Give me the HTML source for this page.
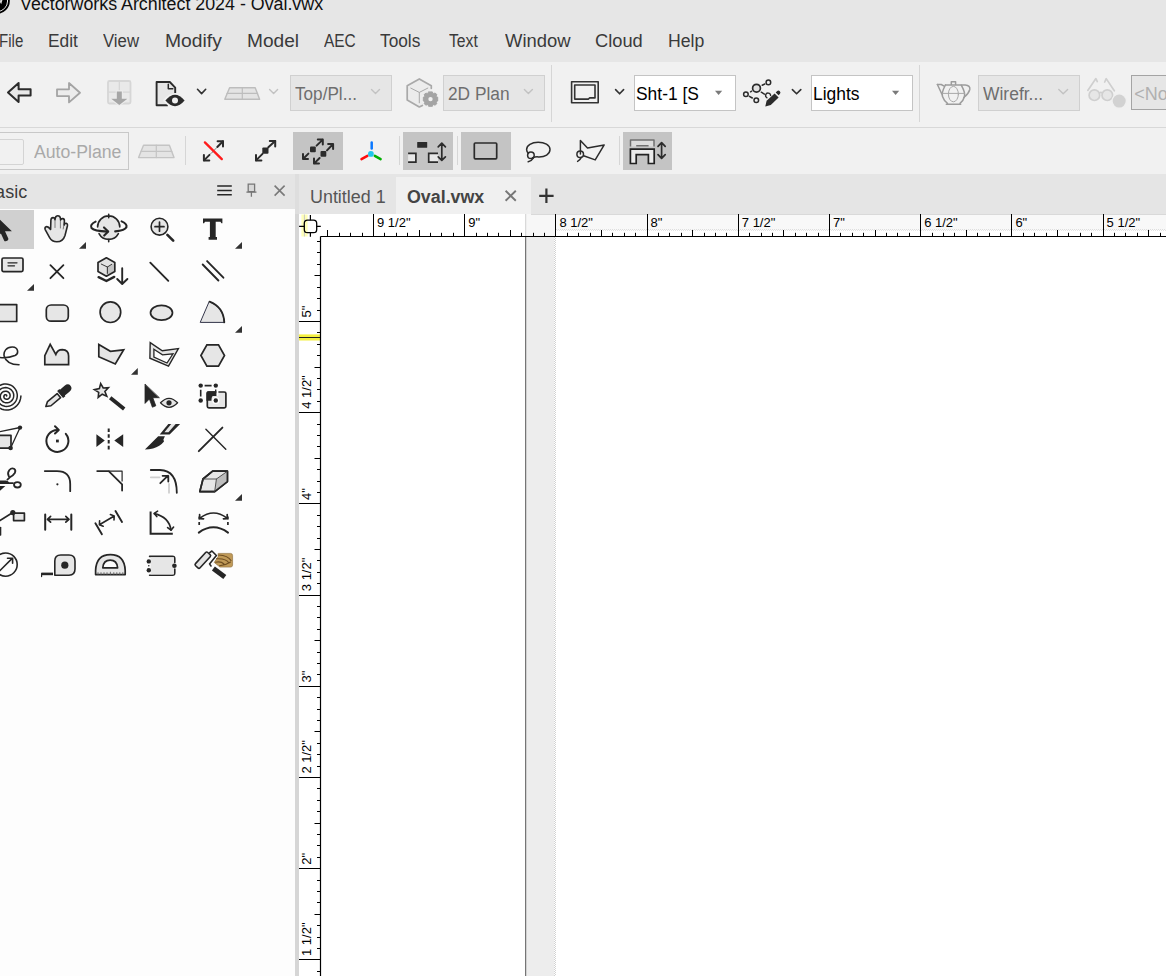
<!DOCTYPE html>
<html><head><meta charset="utf-8">
<style>
*{margin:0;padding:0;box-sizing:border-box}
html,body{width:1166px;height:976px;overflow:hidden;background:#f1f1f1;font-family:"Liberation Sans",sans-serif;position:relative}
.a{position:absolute}
.t{position:absolute;white-space:pre;font-size:17px;line-height:20px}
.menu{color:#3c3c3c}
.box{position:absolute;border:1px solid #d0d0d0;background:#e6e6e6}
.wbox{position:absolute;border:1px solid #c4c4c4;background:#fff}
.sep{position:absolute;width:1px;background:#d6d6d6}
.hl{position:absolute;background:#c4c4c4}
svg.ov{position:absolute;left:0;top:0;width:1166px;height:976px;overflow:visible}
</style></head><body>
<!-- title + menu -->
<div class="a" style="left:0;top:0;width:1166px;height:62px;background:#e6e6e6"></div>

<!-- toolbar row 1 -->
<div class="a" style="left:0;top:62px;width:1166px;height:65px;background:#f1f1f1"></div>
<div class="a" style="left:0;top:127px;width:1166px;height:1px;background:#d8d8d8"></div>
<div class="box" style="left:290px;top:75px;width:102px;height:36px"></div>
<div class="box" style="left:443px;top:75px;width:102px;height:36px"></div>
<div class="sep" style="left:551px;top:65px;height:57px"></div>
<div class="wbox" style="left:634px;top:75px;width:102px;height:36px"></div>
<div class="wbox" style="left:811px;top:75px;width:102px;height:36px"></div>
<div class="sep" style="left:919px;top:65px;height:57px"></div>
<div class="box" style="left:978px;top:75px;width:102px;height:36px"></div>
<div class="box" style="left:1131px;top:75px;width:60px;height:35px;border:1.5px solid #a4a4a4"></div>

<!-- toolbar row 2 -->
<div class="a" style="left:-2px;top:132px;width:131px;height:38px;border:1px solid #c8c8c8"></div>
<div class="a" style="left:-3px;top:139px;width:27px;height:26px;border:1.5px solid #d4d4d4;border-radius:2px"></div>
<div class="sep" style="left:185px;top:136px;height:29px"></div>
<div class="hl" style="left:293px;top:132px;width:50px;height:38px"></div>
<div class="sep" style="left:399px;top:136px;height:29px"></div>
<div class="hl" style="left:403px;top:132px;width:50px;height:38px"></div>
<div class="sep" style="left:457px;top:136px;height:29px"></div>
<div class="hl" style="left:461px;top:132px;width:50px;height:38px"></div>
<div class="sep" style="left:619px;top:136px;height:29px"></div>
<div class="hl" style="left:623px;top:132px;width:49px;height:38px"></div>

<!-- palette -->
<div class="a" style="left:0;top:174px;width:296px;height:35px;background:#e5e5e5"></div>
<div class="a" style="left:0;top:209px;width:295px;height:767px;background:#fdfdfd"></div>
<div class="a" style="left:295px;top:174px;width:4px;height:40px;background:#dedede"></div>
<div class="a" style="left:295px;top:214px;width:4px;height:762px;background:#d6d6d6"></div>
<div class="hl" style="left:0;top:210px;width:34px;height:39px;background:#d0d0d0"></div>

<!-- tab bar -->
<div class="a" style="left:299px;top:174px;width:867px;height:40px;background:#e5e5e5"></div>
<div class="a" style="left:396px;top:177px;width:135px;height:37px;background:#f0f0f0"></div>

<!-- canvas -->
<div class="a" style="left:299px;top:214px;width:867px;height:762px;background:#fff"></div>
<div class="a" style="left:526px;top:214px;width:30px;height:22px;background:#f7f7f7"></div>
<div class="a" style="left:556px;top:214px;width:610px;height:16px;background:#f8f8f8"></div>
<div class="a" style="left:531px;top:214px;width:635px;height:1px;background:#d9d9d9"></div>
<div class="a" style="left:526px;top:237px;width:28px;height:739px;background:#ededed"></div>
<div class="t" style="left:20.2px;top:-6.4px;color:#111;font-size:18px;font-weight:400;transform:scaleX(0.990);transform-origin:0 0;">Vectorworks Architect 2024 - Oval.vwx</div>
<div class="t" style="left:-1.4px;top:30.6px;color:#3a3a3a;font-size:18px;font-weight:400;transform:scaleX(0.836);transform-origin:0 0;">File</div>
<div class="t" style="left:48.1px;top:30.6px;color:#3a3a3a;font-size:18px;font-weight:400;transform:scaleX(0.963);transform-origin:0 0;">Edit</div>
<div class="t" style="left:103.4px;top:30.6px;color:#3a3a3a;font-size:18px;font-weight:400;transform:scaleX(0.931);transform-origin:0 0;">View</div>
<div class="t" style="left:164.9px;top:30.6px;color:#3a3a3a;font-size:18px;font-weight:400;transform:scaleX(1.071);transform-origin:0 0;">Modify</div>
<div class="t" style="left:246.7px;top:30.6px;color:#3a3a3a;font-size:18px;font-weight:400;transform:scaleX(1.062);transform-origin:0 0;">Model</div>
<div class="t" style="left:323.8px;top:30.6px;color:#3a3a3a;font-size:18px;font-weight:400;transform:scaleX(0.858);transform-origin:0 0;">AEC</div>
<div class="t" style="left:380.3px;top:30.6px;color:#3a3a3a;font-size:18px;font-weight:400;transform:scaleX(0.960);transform-origin:0 0;">Tools</div>
<div class="t" style="left:448.9px;top:30.6px;color:#3a3a3a;font-size:18px;font-weight:400;transform:scaleX(0.873);transform-origin:0 0;">Text</div>
<div class="t" style="left:505.3px;top:30.6px;color:#3a3a3a;font-size:18px;font-weight:400;transform:scaleX(1.023);transform-origin:0 0;">Window</div>
<div class="t" style="left:595.2px;top:30.6px;color:#3a3a3a;font-size:18px;font-weight:400;transform:scaleX(1.016);transform-origin:0 0;">Cloud</div>
<div class="t" style="left:667.9px;top:30.6px;color:#3a3a3a;font-size:18px;font-weight:400;transform:scaleX(0.981);transform-origin:0 0;">Help</div>
<div class="t" style="left:295.3px;top:83.7px;color:#6e6e6e;font-size:18px;font-weight:400;transform:scaleX(0.952);transform-origin:0 0;">Top/Pl...</div>
<div class="t" style="left:447.6px;top:83.7px;color:#6e6e6e;font-size:18px;font-weight:400;transform:scaleX(0.961);transform-origin:0 0;">2D Plan</div>
<div class="t" style="left:635.7px;top:83.7px;color:#000;font-size:18px;font-weight:400;transform:scaleX(0.967);transform-origin:0 0;">Sht-1 [S</div>
<div class="t" style="left:813.0px;top:83.7px;color:#000;font-size:18px;font-weight:400;transform:scaleX(0.968);transform-origin:0 0;">Lights</div>
<div class="t" style="left:983.1px;top:83.7px;color:#6e6e6e;font-size:18px;font-weight:400;transform:scaleX(0.970);transform-origin:0 0;">Wirefr...</div>
<div class="t" style="left:1134.3px;top:83.7px;color:#b0b0b0;font-size:18px;font-weight:400;">&lt;No</div>
<div class="t" style="left:34.2px;top:141.7px;color:#a9a9a9;font-size:18px;font-weight:400;transform:scaleX(0.981);transform-origin:0 0;">Auto-Plane</div>
<div class="t" style="left:-16.9px;top:181.8px;color:#3c3c3c;font-size:18px;font-weight:400;">Basic</div>
<div class="t" style="left:309.6px;top:186.6px;color:#555;font-size:18px;font-weight:400;transform:scaleX(0.995);transform-origin:0 0;">Untitled 1</div>
<div class="t" style="left:406.7px;top:186.6px;color:#444;font-size:18px;font-weight:700;transform:scaleX(0.990);transform-origin:0 0;">Oval.vwx</div>
<svg class="ov" viewBox="0 0 1166 976">
<g id="ruler">
<rect x="301.4" y="214.5" width="6.2" height="22" fill="#ffffb8"/>
<path d="M304.4,214.5V236.5" stroke="#c8c8c8" stroke-width="1"/>
<rect x="299" y="334.4" width="21.5" height="6.1" fill="#f4f040"/>
<path d="M299,337.5H320.5" stroke="#222" stroke-width="1"/>
<path d="M525.7,214V236" stroke="#d0d0d0" stroke-width="1"/>
<path d="M556,229.5H1166" stroke="#dedede" stroke-width="1" stroke-dasharray="1,1"/>
<path d="M557,230.5H1166" stroke="#e4e4e4" stroke-width="1" stroke-dasharray="1,1"/>
<path d="M327.5,230V236.5M339.5,232.8V236.5M350.5,232.8V236.5M362.5,232.8V236.5M373.5,214V236.5M384.5,232.8V236.5M396.5,232.8V236.5M407.5,232.8V236.5M419.5,230V236.5M430.5,232.8V236.5M441.5,232.8V236.5M453.5,232.8V236.5M464.5,214V236.5M476.5,232.8V236.5M487.5,232.8V236.5M498.5,232.8V236.5M510.5,230V236.5M521.5,232.8V236.5M533.5,232.8V236.5M544.5,232.8V236.5M555.5,214V236.5M567.5,232.8V236.5M578.5,232.8V236.5M590.5,232.8V236.5M601.5,230V236.5M612.5,232.8V236.5M624.5,232.8V236.5M635.5,232.8V236.5M647.5,214V236.5M658.5,232.8V236.5M669.5,232.8V236.5M681.5,232.8V236.5M692.5,230V236.5M704.5,232.8V236.5M715.5,232.8V236.5M726.5,232.8V236.5M738.5,214V236.5M749.5,232.8V236.5M761.5,232.8V236.5M772.5,232.8V236.5M783.5,230V236.5M795.5,232.8V236.5M806.5,232.8V236.5M818.5,232.8V236.5M829.5,214V236.5M840.5,232.8V236.5M852.5,232.8V236.5M863.5,232.8V236.5M875.5,230V236.5M886.5,232.8V236.5M897.5,232.8V236.5M909.5,232.8V236.5M920.5,214V236.5M932.5,232.8V236.5M943.5,232.8V236.5M954.5,232.8V236.5M966.5,230V236.5M977.5,232.8V236.5M989.5,232.8V236.5M1000.5,232.8V236.5M1011.5,214V236.5M1023.5,232.8V236.5M1034.5,232.8V236.5M1046.5,232.8V236.5M1057.5,230V236.5M1068.5,232.8V236.5M1080.5,232.8V236.5M1091.5,232.8V236.5M1103.5,214V236.5M1114.5,232.8V236.5M1125.5,232.8V236.5M1137.5,232.8V236.5M1148.5,230V236.5M1160.5,232.8V236.5M317,241.5H320.5M317,252.5H320.5M317,264.5H320.5M314.5,275.5H320.5M317,287.5H320.5M317,298.5H320.5M317,310.5H320.5M299,321.5H320.5M317,332.5H320.5M317,344.5H320.5M317,355.5H320.5M314.5,367.5H320.5M317,378.5H320.5M317,389.5H320.5M317,401.5H320.5M299,412.5H320.5M317,424.5H320.5M317,435.5H320.5M317,446.5H320.5M314.5,458.5H320.5M317,469.5H320.5M317,481.5H320.5M317,492.5H320.5M299,503.5H320.5M317,515.5H320.5M317,526.5H320.5M317,538.5H320.5M314.5,549.5H320.5M317,560.5H320.5M317,572.5H320.5M317,583.5H320.5M299,595.5H320.5M317,606.5H320.5M317,617.5H320.5M317,629.5H320.5M314.5,640.5H320.5M317,652.5H320.5M317,663.5H320.5M317,674.5H320.5M299,686.5H320.5M317,697.5H320.5M317,709.5H320.5M317,720.5H320.5M314.5,731.5H320.5M317,743.5H320.5M317,754.5H320.5M317,766.5H320.5M299,777.5H320.5M317,788.5H320.5M317,800.5H320.5M317,811.5H320.5M314.5,823.5H320.5M317,834.5H320.5M317,845.5H320.5M317,857.5H320.5M299,868.5H320.5M317,880.5H320.5M317,891.5H320.5M317,902.5H320.5M314.5,914.5H320.5M317,925.5H320.5M317,937.5H320.5M317,948.5H320.5M299,959.5H320.5M317,971.5H320.5" stroke="#000" stroke-width="1" fill="none"/>
<path d="M320.5,236.5H1166M320.5,236.5V976" stroke="#000" stroke-width="1.2" fill="none"/>
<path d="M525.7,237V976" stroke="#555" stroke-width="1"/>
<path d="M554.5,237V976" stroke="#d2d2d2" stroke-width="1" stroke-dasharray="1,1"/>
<path d="M555.5,238V976" stroke="#d2d2d2" stroke-width="1" stroke-dasharray="1,1"/>
<rect x="304.3" y="220.2" width="12.4" height="12.5" rx="3.2" fill="none" stroke="#000" stroke-width="1.3"/>
<path d="M299.1,226.4H304.3M316.7,226.4H320.8M310.4,215V220.2M310.4,232.7V236.8" stroke="#000" stroke-width="1.2"/>
<g font-family="Liberation Sans" font-size="13" fill="#000">
<text x="377.0" y="227.3">9 1/2&quot;</text>
<text x="468.2" y="227.3">9&quot;</text>
<text x="559.4" y="227.3">8 1/2&quot;</text>
<text x="650.6" y="227.3">8&quot;</text>
<text x="741.8" y="227.3">7 1/2&quot;</text>
<text x="833.0" y="227.3">7&quot;</text>
<text x="924.2" y="227.3">6 1/2&quot;</text>
<text x="1015.4" y="227.3">6&quot;</text>
<text x="1106.6" y="227.3">5 1/2&quot;</text>
<text transform="translate(311.2,317.6) rotate(-90)">5&quot;</text>
<text transform="translate(311.2,408.8) rotate(-90)">4 1/2&quot;</text>
<text transform="translate(311.2,500.0) rotate(-90)">4&quot;</text>
<text transform="translate(311.2,591.2) rotate(-90)">3 1/2&quot;</text>
<text transform="translate(311.2,682.4) rotate(-90)">3&quot;</text>
<text transform="translate(311.2,773.6) rotate(-90)">2 1/2&quot;</text>
<text transform="translate(311.2,864.8) rotate(-90)">2&quot;</text>
<text transform="translate(311.2,956.0) rotate(-90)">1 1/2&quot;</text>
</g>
</g>
<g id="tb1" stroke-linejoin="round" stroke-linecap="round">
<!-- back arrow -->
<path d="M8,92.5L18.6,83V89.3H30.6V95.6H18.6V102Z" fill="#e8e8e8" stroke="#2b2b2b" stroke-width="2"/>
<!-- forward arrow (disabled) -->
<path d="M80,92.7L69,83V89.3H57V96.1H69V102.4Z" fill="#ececec" stroke="#a4a4a4" stroke-width="1.8"/>
<!-- save down icon (disabled) -->
<rect x="108" y="81" width="22.5" height="22.5" rx="1.5" fill="#e9e9e9" stroke="#d6d6d6" stroke-width="1.8"/>
<path d="M119.3,81V92.1M108,92.1H130.5" stroke="#d6d6d6" stroke-width="1.3"/>
<path d="M116.8,91.4H121.8V98.8H127.4L119.3,105L111.2,98.8H116.8Z" fill="#a9a9a9" stroke="#ececec" stroke-width="2.2"/>
<path d="M116.8,91.4H121.8V98.8H127.4L119.3,105L111.2,98.8H116.8Z" fill="#a6a6a6"/>
<!-- doc + eye -->
<path d="M167.8,105.2H156.6V82H169.8L175.2,87.6V93" fill="#e6e6e6" stroke="#2b2b2b" stroke-width="1.9" stroke-linecap="butt"/>
<path d="M168.3,84.3V88.8H172.8" fill="none" stroke="#2b2b2b" stroke-width="1.5"/>
<path d="M164.2,100.5Q175,88.2 185.8,100.5Q175,112.8 164.2,100.5Z" fill="#f1f1f1" stroke="#f1f1f1" stroke-width="2"/>
<path d="M165.4,100.5Q175,89.2 184.6,100.5Q175,111.8 165.4,100.5Z" fill="#2b2b2b"/>
<circle cx="175" cy="100.5" r="3" fill="#f0f0f0"/>
<path d="M197.5,89.3L201.6,93.6L205.7,89.3" fill="none" stroke="#333" stroke-width="1.6"/>
<!-- plane (disabled) -->
<path d="M229.6,87.8H255.2L259.6,99.3H224.8Z" fill="#e4e4e4" stroke="#bdbdbd" stroke-width="1.4"/>
<path d="M242.3,87.8V99.3M227,93.4H257.6" stroke="#bdbdbd" stroke-width="1.2"/>
<path d="M269.6,89.6L273.6,93.6L277.6,89.6" fill="none" stroke="#c2c2c2" stroke-width="1.4"/>
<path d="M371.5,89.6L375.5,93.6L379.5,89.6" fill="none" stroke="#c2c2c2" stroke-width="1.4"/>
<!-- cube gear (disabled) -->
<path d="M422.4,105.4L419.3,107L407.2,100V85.8L419.3,78.9L431.3,85.8V88.3" fill="#ececec" stroke="#a9a9a9" stroke-width="1.7"/>
<path d="M410.8,88.1L419.3,92.4L427.8,88.1M419.3,92.4V102.8" fill="none" stroke="#a9a9a9" stroke-width="1"/>
<g transform="translate(430.5,99.1)">
<circle r="8.6" fill="#f0f0f0"/>
<path d="M-1.9,-7.2H1.9L2.6,-5.2L4.5,-6.1L6.4,-4.5L5.3,-2.6L7.2,-1.9V1.9L5.3,2.6L6.4,4.5L4.5,6.1L2.6,5.2L1.9,7.2H-1.9L-2.6,5.2L-4.5,6.1L-6.4,4.5L-5.3,2.6L-7.2,1.9V-1.9L-5.3,-2.6L-6.4,-4.5L-4.5,-6.1L-2.6,-5.2Z" fill="#a4a4a4" stroke="#a4a4a4" stroke-width="1"/>
<circle r="2.2" fill="#f0f0f0"/>
</g>
<path d="M524.4,89.6L528.4,93.6L532.4,89.6" fill="none" stroke="#c2c2c2" stroke-width="1.4"/>
<!-- sheet rect -->
<rect x="571.6" y="81.8" width="26.6" height="21" fill="none" stroke="#333" stroke-width="1.6"/>
<path d="M574.7,85H595V97.9H589.5L588.5,99.1H574.7Z" fill="none" stroke="#333" stroke-width="1.6"/>
<path d="M615.6,89.6L619.6,93.8L623.6,89.6" fill="none" stroke="#333" stroke-width="1.6"/>
<path d="M715,90.7H722.2L718.6,94.9Z" fill="#7a7a7a" stroke="none"/>
<!-- nodes pen -->
<circle cx="756.5" cy="88.2" r="3.9" fill="#e2e2e2" stroke="#2b2b2b" stroke-width="1.7"/>
<circle cx="768.4" cy="82.4" r="2.3" fill="none" stroke="#2b2b2b" stroke-width="1.5"/>
<circle cx="745.9" cy="94.3" r="2.3" fill="none" stroke="#2b2b2b" stroke-width="1.5"/>
<circle cx="756.3" cy="100.3" r="2.3" fill="none" stroke="#2b2b2b" stroke-width="1.5"/>
<path d="M762.2,85.2L764.8,84M750.6,91.8L751.6,91.2M749.4,96.4L752.3,98M761.3,92.2L764.4,94.2" stroke="#2b2b2b" stroke-width="1.5"/>
<path d="M770.6,95.5A2.5,2.5 0 1 0 767,97.8" fill="none" stroke="#2b2b2b" stroke-width="1.4"/>
<path d="M765.3,106.6L766.6,100.8L774.6,93.4L778.6,97.4L770.8,105Z" fill="#2b2b2b" stroke="none"/>
<path d="M775.7,92.4L777.2,91A2,2 0 0 1 780,93.8L778.6,95.3Z" fill="#2b2b2b"/>
<path d="M792.4,89.6L796.6,93.8L800.8,89.6" fill="none" stroke="#333" stroke-width="1.6"/>
<path d="M892,90.7H899.2L895.6,94.9Z" fill="#7a7a7a" stroke="none"/>
<!-- teapot -->
<g fill="none" stroke="#9c9c9c" stroke-width="1.5">
<path d="M937.4,84.5H941.2L944.2,86.2"/>
<path d="M937.4,84.5L941.8,94"/>
<path d="M945.4,85H965.2Q970.5,85.5 969.8,89.5Q968.5,94 963.8,97.5"/>
<path d="M945.4,85Q941.2,93 942.5,96.5Q944,101 947.5,103.3"/>
<path d="M961.3,85.2Q965.5,93 964.5,96.5Q963.5,100.5 960,103.3"/>
<path d="M946.3,104.2H960.7"/>
<path d="M951.3,84.6V81.7H955.6V84.6"/>
</g>
<ellipse cx="953.4" cy="94.1" rx="5" ry="7.7" fill="none" stroke="#a8a8a8" stroke-width="1"/>
<path d="M942.5,93.4H964.5" stroke="#a8a8a8" stroke-width="1"/>
<path d="M1058.8,89.6L1063.2,93.8L1067.6,89.6" fill="none" stroke="#c2c2c2" stroke-width="1.4"/>
<!-- glasses -->
<g fill="#e6e6e6" stroke="#cfcfcf" stroke-width="1.7">
<circle cx="1094.4" cy="95.2" r="5.3"/>
<circle cx="1107.3" cy="95.2" r="5.3"/>
<path d="M1099.5,93Q1100.9,91.6 1102.2,93" fill="none"/>
<path d="M1087.8,90.4L1095.9,78.6L1097.3,81.6" fill="none"/>
<path d="M1114.3,90.8L1106.2,78.6L1104.7,82" fill="none"/>
</g>
<circle cx="1119.2" cy="101.1" r="7.8" fill="#f0f0f0"/>
<circle cx="1119.2" cy="101.1" r="6.5" fill="#d2d2d2"/>
</g>
<g id="tb2" stroke-linejoin="round" stroke-linecap="round">
<!-- auto-plane plane icon -->
<path d="M143.5,145.2H169.4L174,157.6H138.6Z" fill="#e4e4e4" stroke="#c4c4c4" stroke-width="1.4"/>
<path d="M156.3,145.2V157.6M141,151.4H171.8" stroke="#c4c4c4" stroke-width="1.2"/>
<!-- icon 1 red slash -->
<path d="M204,160.4L209.5,154.9M217.3,147L223,141.2" stroke="#2b2b2b" stroke-width="2"/>
<path d="M211,153.4L215.8,148.6" stroke="#555" stroke-width="1" stroke-dasharray="1,1"/>
<path d="M217.6,141.2H223V146.6M203.9,155V160.4H209.3" fill="none" stroke="#2b2b2b" stroke-width="2"/>
<path d="M204.9,142.4L221.8,159.1" stroke="#ff1b1b" stroke-width="2.3"/>
<!-- icon 2 -->
<path d="M256,160.4L262.5,153.9M268.3,147.3L275.2,141" stroke="#2b2b2b" stroke-width="2"/>
<path d="M269.8,141H275.2V146.4M256,155V160.4H261.4" fill="none" stroke="#2b2b2b" stroke-width="2"/>
<rect x="262.3" y="147.6" width="6.2" height="6.2" rx="1" fill="#2b2b2b"/>
<!-- icon 3 -->
<g stroke="#2b2b2b" stroke-width="2" fill="none">
<path d="M303,159L308.4,153.6M316.6,145.6L322.8,139.6M317.8,139.6H322.8V144.6M303,154V159H308"/>
<path d="M314,163.6L319.6,158M327,150.4L333.1,144M328.1,144H333.1V149M314,158.6V163.6H319"/>
</g>
<rect x="310" y="146.5" width="5.8" height="5.8" rx="1" fill="#2b2b2b"/>
<rect x="320.5" y="151" width="5.8" height="5.8" rx="1" fill="#2b2b2b"/>
<!-- axis -->
<path d="M371.7,142.4V148.6" stroke="#0a78ff" stroke-width="2.5"/>
<path d="M361.5,159.1L367.4,155.8" stroke="#ff0a0a" stroke-width="2.5"/>
<path d="M374.8,155.8L380.6,159.1" stroke="#00b000" stroke-width="2.5"/>
<circle cx="370.9" cy="153.9" r="2.9" fill="#20c6ea"/>
<!-- icon 5 -->
<rect x="417.2" y="142.1" width="10" height="5.6" rx="0.5" fill="#2b2b2b"/>
<path d="M408.1,153.4H415.9V162.1H408.1" fill="#e8e8e8" stroke="#2b2b2b" stroke-width="1.7" stroke-linecap="butt" stroke-linejoin="miter"/>
<path d="M438,153.4H428.7V162.1H438" fill="#e8e8e8" stroke="#2b2b2b" stroke-width="1.7" stroke-linecap="butt" stroke-linejoin="miter"/>
<path d="M441.8,143.5V160M438.2,146.8L441.8,143.2L445.4,146.8M438.2,156.8L441.8,160.4L445.4,156.8" fill="none" stroke="#2b2b2b" stroke-width="1.7"/>
<!-- rect icon -->
<rect x="474.3" y="143" width="22.4" height="15.8" rx="1" fill="none" stroke="#2b2b2b" stroke-width="1.7"/>
<!-- lasso -->
<g fill="none" stroke="#2b2b2b" stroke-width="1.5">
<path d="M532.5,157.6Q536,156.6 538.2,156.9C545,157.2 550,154 550,149.6C550,145 544.5,142.3 538.2,142.3C531.5,142.3 526.6,145.5 526.6,149.6Q526.6,152 528.5,153.5"/>
<circle cx="530.9" cy="155.2" r="3.3"/>
<path d="M533.5,157.8Q531.5,161 528.2,161.8"/>
</g>
<!-- poly lasso -->
<g fill="none" stroke="#2b2b2b" stroke-width="1.5">
<path d="M580.4,154V140.6L587.5,148L604.2,144.9L595.2,159.9L583.6,155.8"/>
<circle cx="580.2" cy="154.3" r="3.3"/>
<path d="M581.5,157.2Q580,160.2 577.6,161.4"/>
</g>
<!-- arch icon -->
<path d="M630.5,146.4V140H654V146.4M636.2,145.8H648.6" fill="#dcdcdc" stroke="#707070" stroke-width="1.5" stroke-linecap="butt"/>
<path d="M630.4,163.5V149.2H654.2V163.5H648.4V154.6H636.2V163.5Z" fill="#ececec" stroke="#222" stroke-width="1.7" stroke-linejoin="miter"/>
<path d="M661.6,143V158M658,146.4L661.6,142.6L665.2,146.4M658,154.6L661.6,158.4L665.2,154.6" fill="none" stroke="#2b2b2b" stroke-width="1.7"/>
</g>
<g id="pal" stroke-linejoin="round" stroke-linecap="round">
<!-- corner triangles -->
<path d="M86,242V248.7H79Z M242,242V248.7H235Z M34,284V290.7H27Z M242,326V332.7H235Z M137.8,368V374.7H131Z M242,494V500.7H235Z" fill="#333"/>
<!-- row1: arrow cursor -->
<path d="M-4,216L11.9,231.3H5L8.3,238.6Q8.6,240 7.2,240.8L5.6,241.3Q4.6,241.6 4.1,240.4L0.9,233.4L-4,238Z" fill="#262626"/>
<!-- hand -->
<path d="M50.6,229.4L50.9,220Q51.2,217.6 53,217.6Q54.8,217.6 55,219.6L55.3,218Q55.8,215.8 57.8,215.8Q60,215.8 60.4,218.2L60.6,220Q61.2,218.4 62.8,218.6Q64.6,218.9 64.4,221L64.2,225Q64.8,223 66.2,223.2Q67.8,223.6 67.4,226L65,235.5Q63,241.8 56.8,241.8Q52,241.8 49.6,237.6L45.2,229.6Q44.4,227.4 46.2,226.7Q48,226 50.6,229.4Z" fill="#e6e6e6" stroke="#262626" stroke-width="1.6"/>
<path d="M55,220V227.5M60.4,220V228M64.3,222.5L63.2,229" stroke="#262626" stroke-width="1" opacity="0.55"/>
<!-- orbit -->
<circle cx="108.7" cy="228.4" r="11" fill="#e6e6e6"/>
<path d="M97.6,227A11,11 0 0 1 119.8,227M99,233.6A11,11 0 0 0 118.4,233.6M108.7,214.2V217.8M108.7,239V241.8" fill="none" stroke="#262626" stroke-width="1.6"/>
<path d="M95.6,221.6Q89.5,224.6 91.5,228Q94,231.2 107.6,231.6M115.2,231.4Q125,230.2 126.4,227.2Q127.4,223.8 121.6,221.4" fill="none" stroke="#262626" stroke-width="2.1"/>
<path d="M104,227.4L108.2,231.5L104.2,235.6" fill="none" stroke="#262626" stroke-width="2.1"/>
<!-- zoom -->
<circle cx="159.5" cy="226.7" r="8.4" fill="#e6e6e6" stroke="#262626" stroke-width="1.6"/>
<path d="M159.5,222.2V231.2M155,226.7H164" stroke="#262626" stroke-width="1.7"/>
<path d="M167.4,234.8L173.2,240.6" stroke="#262626" stroke-width="2.6"/>
<!-- T -->
<path d="M203,218.6H222.4V223.2H221.4L220.5,221.8H215.7V237.1H217V239.8H208.6V237.1H209.9V221.8H205L204.1,223.2H203Z" fill="#262626"/>
<!-- row2: text box -->
<rect x="2" y="258" width="21" height="13.6" rx="1.5" fill="#e6e6e6" stroke="#262626" stroke-width="1.7"/>
<path d="M8,262.8H17M8,265.8H14.5" stroke="#262626" stroke-width="1.3"/>
<!-- X -->
<path d="M50.4,265.2L63.4,278.2M63.4,265.2L50.4,278.2" stroke="#262626" stroke-width="1.8"/>
<!-- cube down -->
<path d="M106.4,257.8L114.8,262.4V271.6L106.4,276.2L98,271.6V262.4Z" fill="#e2e2e2"/>
<path d="M107.4,267L113.8,263.2V271.2L106.6,275.2V267Z" fill="#c4c4c4"/>
<path d="M106.4,257.8L114.8,262.4V271.6L106.4,276.2L98,271.6V262.4Z" fill="none" stroke="#262626" stroke-width="1.7"/>
<path d="M101.3,264.1L107.4,267L111.7,264.3M107.4,267V273.4" fill="none" stroke="#262626" stroke-width="0.9"/>
<path d="M98.6,277.2L106.4,281L114.2,276.9" fill="none" stroke="#262626" stroke-width="2.4"/>
<path d="M122.2,268.2V283.6M117.2,279L122.2,284L127.4,279" fill="none" stroke="#262626" stroke-width="1.9"/>
<!-- line -->
<path d="M150.3,262.7L168.3,280.8" stroke="#262626" stroke-width="1.9"/>
<!-- double line -->
<path d="M202.7,264.5L218.4,280.5M207.1,261.1L223.4,277.7" stroke="#262626" stroke-width="1.9"/>
<!-- row3: rect -->
<rect x="-6" y="304.6" width="22.7" height="16.9" fill="#e6e6e6" stroke="#262626" stroke-width="1.7"/>
<rect x="46.3" y="305" width="22" height="16.2" rx="4.8" fill="#e6e6e6" stroke="#262626" stroke-width="1.7"/>
<circle cx="110.4" cy="312.2" r="10.3" fill="#e6e6e6" stroke="#262626" stroke-width="1.7"/>
<ellipse cx="161.5" cy="312.8" rx="11" ry="7.4" fill="#e6e6e6" stroke="#262626" stroke-width="1.7"/>
<path d="M209.6,301.6Q223.6,307 224.3,322.4H200.6Z" fill="#e6e6e6" stroke="#323448" stroke-width="1"/>
<path d="M209.6,301.6Q223.6,307 224.3,322.4" fill="none" stroke="#262626" stroke-width="1.8"/>
<!-- row4: freehand -->
<path d="M-2,357.2C3,358.2 10,357.6 15,355.6C19,353.8 18.5,347.2 12.5,347C6.2,346.8 3.2,351.8 4.2,356.2C5.8,361.8 12,364.6 19,364.8" fill="none" stroke="#262626" stroke-width="1.6"/>
<!-- polyline with arc -->
<path d="M44.8,364.6V355.6L50.2,344.4L55.8,354.4Q57.5,349.6 62.4,349.6Q68.6,349.8 68.6,356V364.6Z" fill="#e6e6e6" stroke="#262626" stroke-width="1.7" stroke-linejoin="miter"/>
<!-- polygon -->
<path d="M98.8,344.4L110.4,351.3L123.7,349.8L115.3,364L98.8,356.8Z" fill="#e6e6e6" stroke="#262626" stroke-width="1.7" stroke-linejoin="miter"/>
<!-- double polygon -->
<path d="M150.2,342.6L162.3,350.8L178.4,348.6L168.5,366.2L149.9,358.2Z" fill="#e6e6e6" stroke="#262626" stroke-width="1.4" stroke-linejoin="miter"/>
<path d="M153.9,349.3L162.5,354.8L173,353.8L167,363L153.9,357.2Z" fill="#fdfdfd" stroke="#262626" stroke-width="1.3" stroke-linejoin="miter"/>
<!-- hexagon -->
<path d="M200.9,355.5L206.9,344.9H218.5L224.5,355.5L218.5,366.1H206.9Z" fill="#e6e6e6" stroke="#262626" stroke-width="1.7" stroke-linejoin="miter"/>
<!-- row5: spiral -->
<path d="M6.6,396.1L6.6,396.0L6.7,395.8L6.7,395.7L6.7,395.6L6.7,395.4L6.6,395.2L6.5,395.1L6.4,395.0L6.2,394.8L6.0,394.8L5.7,394.7L5.5,394.7L5.2,394.7L5.0,394.8L4.7,394.9L4.5,395.1L4.3,395.4L4.1,395.6L3.9,396.0L3.9,396.3L3.8,396.7L3.9,397.1L4.0,397.4L4.1,397.8L4.4,398.2L4.7,398.5L5.0,398.8L5.4,399.0L5.9,399.1L6.4,399.2L6.9,399.2L7.4,399.2L7.9,399.0L8.4,398.8L8.8,398.4L9.2,398.0L9.6,397.5L9.9,397.0L10.0,396.4L10.1,395.8L10.1,395.1L10.0,394.5L9.8,393.9L9.5,393.3L9.0,392.7L8.5,392.2L7.9,391.8L7.2,391.5L6.5,391.3L5.8,391.2L5.0,391.2L4.2,391.4L3.4,391.6L2.7,392.0L2.0,392.6L1.5,393.2L1.0,393.9L0.6,394.7L0.4,395.6L0.3,396.5L0.3,397.4L0.5,398.3L0.8,399.2L1.3,400.0L1.9,400.8L2.7,401.5L3.5,402.0L4.4,402.4L5.4,402.7L6.5,402.8L7.5,402.8L8.6,402.5L9.6,402.2L10.6,401.6L11.4,400.9L12.2,400.1L12.8,399.1L13.3,398.0L13.6,396.9L13.7,395.7L13.7,394.5L13.4,393.3L13.0,392.2L12.3,391.1L11.5,390.1L10.6,389.3L9.5,388.6L8.3,388.1L7.0,387.7L5.7,387.6L4.4,387.7L3.1,387.9L1.8,388.4L0.6,389.1L-0.5,390.0L-1.4,391.1L-2.2,392.3L-2.8,393.6L-3.2,395.0L-3.3,396.5L-3.2,397.9L-2.9,399.4L-2.4,400.8L-1.6,402.1L-0.6,403.3L0.5,404.4L1.8,405.2L3.3,405.8L4.8,406.2L6.4,406.4L8.0,406.3L9.6,406.0L11.2,405.4L12.6,404.6L13.9,403.5L15.1,402.2L16.0,400.8L16.7,399.2L17.1,397.6L17.3,395.8L17.2,394.1L16.8,392.3L16.2,390.6L15.3,389.1L14.2,387.7L12.8,386.4L11.3,385.4L9.6,384.7L7.7,384.2L5.9,384.0L4.0,384.1L2.1,384.5L0.3,385.2L-1.4,386.1L-2.9,387.4L-4.2,388.8L-5.3,390.5L-6.2,392.3L-6.7,394.2L-6.9,396.3L-6.8,398.3L-6.4,400.3L-5.7,402.3L-4.6,404.1L-3.3,405.7L-1.8,407.1L0.0,408.3L2.0,409.2L4.0,409.8L6.2,410.0L8.4,409.9L10.5,409.5L12.6,408.7L14.5,407.6L16.3,406.2L17.8,404.6L19.1,402.7L20.0,400.6L20.6,398.4L20.9,396.1" fill="none" stroke="#262626" stroke-width="1.5"/>
<!-- eyedropper -->
<g transform="translate(45.4,406.9) rotate(-40)">
<path d="M0.6,0L5,-2.7H17.6V2.7H5Z" fill="#e6e6e6" stroke="#262626" stroke-width="1.6" stroke-linejoin="round"/>
<path d="M19.2,-4.6H22.2V-3.8H28.2Q32.8,-3.8 32.8,0Q32.8,3.8 28.2,3.8H22.2V4.6H19.2Z" fill="#262626"/>
</g>
<!-- magic wand -->
<path d="M100.7,383.6L103.2,388.0L108.4,387.7L104.9,391.5L106.8,396.2L102.2,394.2L98.2,397.4L98.7,392.3L94.4,389.6L99.4,388.5Z" fill="#e6e6e6" stroke="#262626" stroke-width="1.6" stroke-linejoin="miter"/>
<path d="M110.2,397.8L124.2,409" stroke="#262626" stroke-width="3.8" stroke-linecap="butt"/>
<!-- select eye -->
<path d="M145,384.4V403.4L149.4,399L152.4,407.2L155.8,405.8L152.8,397.7H159Z" fill="#262626" stroke="#262626" stroke-width="0.8"/>
<path d="M160.5,402.8Q169,393.8 177.6,402.8Q169,411.8 160.5,402.8Z" fill="#e6e6e6" stroke="#262626" stroke-width="1.3"/>
<circle cx="169" cy="402.8" r="2.6" fill="#262626"/>
<!-- selection box -->
<rect x="207.3" y="392" width="18.6" height="15.8" rx="1.6" fill="#e6e6e6" stroke="#262626" stroke-width="1.7"/>
<path d="M217.4,390V395" stroke="#fdfdfd" stroke-width="2"/>
<path d="M206.4,392.8Q206.4,391.2 208,391.2H215V389.4H216.4V396.1H212.6Q211.4,397.4 211.4,400.8H206.4Z" fill="#262626"/>
<circle cx="215.8" cy="400.5" r="3.6" fill="#fdfdfd"/>
<path d="M204.6,385.6H211.6M200.7,389.8V396.4" stroke="#262626" stroke-width="1.6" stroke-linecap="butt"/>
<circle cx="200.7" cy="385.6" r="2.2" fill="#262626"/><circle cx="215.8" cy="385.6" r="2.2" fill="#262626"/>
<circle cx="200.7" cy="400.5" r="2.2" fill="#262626"/><circle cx="215.8" cy="400.5" r="2.2" fill="#262626"/>
<!-- row6: reshape -->
<path d="M-4,435.4H11V448.2H-4Z" fill="#e6e6e6" stroke="#262626" stroke-width="1.7"/>
<path d="M-2,432L20.1,427.5L10.6,448.1" fill="none" stroke="#262626" stroke-width="1.3"/>
<circle cx="20" cy="427.6" r="2.2" fill="#262626"/><circle cx="10.6" cy="448" r="2.3" fill="#262626"/>
<!-- rotate -->
<path d="M65.8,433.8A11,11 0 1 1 57.4,429.9" fill="none" stroke="#262626" stroke-width="2"/>
<path d="M55,426.3L58.8,429.9L55,433.5" fill="none" stroke="#262626" stroke-width="2"/>
<rect x="56" y="439.6" width="2.8" height="2.8" fill="#262626"/>
<!-- mirror -->
<path d="M108.7,428.4V451" stroke="#262626" stroke-width="2" stroke-dasharray="3.6,2.2" stroke-linecap="butt"/>
<path d="M96.4,434.2L104.8,440.6L96.4,447Z M123.2,434.2L114.3,440.6L123.2,447Z" fill="#262626"/>
<!-- knife -->
<path d="M168.3,424.1H180.1L169.6,434.4H159.7Z" fill="#262626"/>
<path d="M171.2,424.1H175.7L168.5,432.3H164.4Z" fill="#e6e6e6"/>
<path d="M158.2,436.2H164.9L163.4,439.5L164,441.4Q160,446.5 153,448.4Q149,449.5 144.9,449.6Z" fill="#262626"/>
<!-- X intersect -->
<path d="M198.8,451.2L222.4,427.6" stroke="#262626" stroke-width="1.9"/>
<path d="M205.9,429.2L225.8,449.2" stroke="#262626" stroke-width="1.4"/>
<!-- row7: scissors -->
<path d="M8.8,476.2Q7,473 9.4,470Q11.6,467.6 14,468.8Q16.2,470.2 14.8,473Q13.2,475.6 10.4,476.8L7.4,479.6" fill="none" stroke="#262626" stroke-width="1.8"/>
<path d="M-2,480.4H5.8Q7.6,480.6 9.2,482.2H13.6V484H-2Z" fill="#262626"/>
<ellipse cx="17.4" cy="484.8" rx="3.4" ry="2.7" fill="none" stroke="#262626" stroke-width="1.8"/>
<path d="M-2,486H5.4L-1,491.5Z" fill="#262626"/>
<!-- fillet -->
<path d="M44.8,471.1H57Q70.2,471.1 70.2,484V491.2" fill="none" stroke="#262626" stroke-width="1.8"/>
<circle cx="57.4" cy="484.3" r="1.1" fill="#262626"/>
<!-- chamfer -->
<path d="M97.2,471.1H108.7L122.1,484.3V490.6" fill="none" stroke="#262626" stroke-width="1.8" stroke-linejoin="miter"/>
<path d="M108.7,471.1H122.1V481.6" fill="none" stroke="#262626" stroke-width="1.2" stroke-linecap="butt"/>
<!-- offset -->
<path d="M150.8,477.3H159.6M169,484V492.8" stroke="#cfcfcf" stroke-width="1.8"/>
<path d="M150.8,470H160Q176.8,470.5 176.8,492.8" fill="none" stroke="#262626" stroke-width="1.8"/>
<path d="M160.3,483.2L168,475.6M162.6,475.8H168.3V481.5" fill="none" stroke="#262626" stroke-width="1.8"/>
<!-- eraser -->
<path d="M199.8,491.6L203,479L212.6,471.2H227.4V481.6L214.7,491.6Z" fill="#e6e6e6" stroke="#262626" stroke-width="1.7"/>
<path d="M216.4,479L227.4,471.2V481.6L214.7,491.6Z" fill="#bdbdbd"/>
<path d="M199.8,491.6L203,479L212.6,471.2H227.4V481.6L214.7,491.6Z" fill="none" stroke="#262626" stroke-width="1.7"/>
<path d="M203,479H216.4L227.2,471.4M216.4,479L214.7,491.4" fill="none" stroke="#444" stroke-width="0.9"/>
<!-- row8: node line -->
<path d="M-1,521L12.8,512.6" stroke="#262626" stroke-width="1.7"/>
<rect x="13.6" y="513.2" width="10.8" height="7.4" fill="#e6e6e6" stroke="#262626" stroke-width="1.7"/>
<circle cx="12.8" cy="512.6" r="2.6" fill="#262626"/>
<path d="M0.5,527.6V535" stroke="#262626" stroke-width="1.6"/>
<!-- dim horiz -->
<path d="M45.2,514.4V529.8M71.3,514.4V529.8" stroke="#262626" stroke-width="2"/>
<path d="M47.5,519.3H69M50.6,516.4L47.4,519.3L50.6,522.2M65.8,516.4L69,519.3L65.8,522.2" fill="none" stroke="#262626" stroke-width="1.7"/>
<!-- dim diag -->
<path d="M95.4,523.3L101.9,534.2M115.5,511L122,522" stroke="#262626" stroke-width="1.9"/>
<path d="M99.4,524.8L114.2,516M99.6,520.8L99.4,524.8L103.2,526.2M110.4,514.6L114.2,516L114,520" fill="none" stroke="#262626" stroke-width="1.6"/>
<!-- angle dim -->
<path d="M150.6,511.6V533.8H172.8" fill="none" stroke="#262626" stroke-width="2" stroke-linejoin="miter" stroke-linecap="butt"/>
<path d="M154.4,513.6Q169,517 171,530" fill="none" stroke="#262626" stroke-width="1.7"/>
<path d="M157.6,511.2L154.2,513.4L156.8,516.6M167.6,527.6L171,530.2L173.6,527" fill="none" stroke="#262626" stroke-width="1.6"/>
<!-- arc dim -->
<path d="M199.2,516.6V526.6M227.9,516.6V526.6" stroke="#262626" stroke-width="1.7" stroke-dasharray="3,2.4" stroke-linecap="butt"/>
<path d="M200,518.2Q213.5,507.8 227,518.2" fill="none" stroke="#262626" stroke-width="1.7"/>
<path d="M199.6,514.6L199.8,518.6L203.6,518.8M227.2,514.6L227.2,518.6L223.4,518.8" fill="none" stroke="#262626" stroke-width="1.7"/>
<path d="M198.8,532.6Q213.5,522 228,532.6" fill="none" stroke="#262626" stroke-width="2"/>
<!-- row9: diameter -->
<circle cx="5.6" cy="564.6" r="11.6" fill="none" stroke="#262626" stroke-width="1.6"/>
<path d="M-0.5,571L12.2,558.4M7.5,558.2H12.6V563.3" fill="none" stroke="#262626" stroke-width="1.6"/>
<!-- tape measure -->
<path d="M54.8,575.2V561Q54.8,555 60.8,555H69Q75,555 75,561V569Q75,575.2 69,575.2Z" fill="#e6e6e6" stroke="#262626" stroke-width="1.6"/>
<circle cx="64.8" cy="565.2" r="3.6" fill="#262626"/>
<path d="M41.6,573.9H53" stroke="#262626" stroke-width="2.6" stroke-linecap="butt"/>
<path d="M41.6,573.4V576.6" stroke="#262626" stroke-width="1.2"/>
<!-- protractor -->
<path d="M95.6,574.6V570.5Q96.2,554.6 110.4,554.6Q124.6,554.6 125.2,570.5V574.6Z" fill="#e6e6e6" stroke="#262626" stroke-width="1.7"/>
<path d="M102.8,567.8Q103.4,560.2 110.2,560.2Q117,560.2 117.6,567.8Z" fill="#fdfdfd" stroke="#262626" stroke-width="1.7"/>
<path d="M98,574.6V572.6M101,574.6V572.6M104,574.6V572.6M107,574.6V572.6M110.4,574.6V572.2M113.8,574.6V572.6M116.8,574.6V572.6M119.8,574.6V572.6M122.8,574.6V572.6" stroke="#555" stroke-width="0.8"/>
<!-- wall rect dots -->
<path d="M149.6,556.4H172.4Q174.8,556.4 174.8,558.8V562.4M174.8,569V572.8Q174.8,575.2 172.4,575.2H149.6" fill="#e6e6e6" stroke="#262626" stroke-width="1.6"/>
<rect x="150.6" y="557.2" width="23.4" height="17.2" fill="#e6e6e6"/>
<circle cx="148.8" cy="561.4" r="2.2" fill="#262626"/>
<circle cx="148.8" cy="570.2" r="2.2" fill="#262626"/>
<circle cx="148.8" cy="565.8" r="0.8" fill="#262626"/>
<circle cx="174.4" cy="565.7" r="2.3" fill="#262626"/>
<!-- paint roller + wood -->
<path d="M218.5,553.4H230.5Q232.6,553.4 232.6,555.5V565Q232.6,567.1 230.5,567.1H220L214.2,562.4L217.9,557Z" fill="#c09a58" stroke="#8a6a36" stroke-width="0.6"/>
<path d="M218.5,555Q228,555.5 231,560.5M216.5,558.8Q226,558.2 229,563M215.6,562.2Q221,561 224,564M219.5,565.8Q226,565.2 230.5,562" fill="none" stroke="#6e4e22" stroke-width="1.1"/>
<path d="M209.7,552.6L211.9,551L216.4,555.5L209.5,563.9L211,566" fill="none" stroke="#262626" stroke-width="1.6"/>
<rect x="193.85" y="557.1" width="18" height="6.2" rx="1.5" transform="rotate(-47.5 202.85 560.2)" fill="#e2e2e2" stroke="#262626" stroke-width="1.6"/>
<path d="M213.4,568.6L224.8,577" stroke="#262626" stroke-width="5" stroke-linecap="butt"/>
</g>
<g id="misc">
<circle cx="-3" cy="1" r="12.8" fill="#000"/>
<circle cx="-3" cy="1" r="10.6" fill="none" stroke="#e8e8e8" stroke-width="1"/>
<path d="M-1,-1L1,2.5L2,-1" stroke="#ddd" stroke-width="1.4" fill="none"/>
<!-- palette header icons -->
<path d="M217.2,186H231.8M217.2,190.4H231.8M217.2,194.8H231.8" stroke="#262626" stroke-width="1.5"/>
<path d="M248.2,184.2H254.6V191.6H248.2Z" fill="#d8d8d8" stroke="#777" stroke-width="1.3"/>
<path d="M246.4,192.2H256.5M251.4,192.2V196.8" stroke="#777" stroke-width="1.3"/>
<path d="M274.6,185.6L284.6,195.6M284.6,185.6L274.6,195.6" stroke="#7a7a7a" stroke-width="1.6"/>
<!-- tab close and plus -->
<path d="M505.6,190.8L515.8,200.8M515.8,190.8L505.6,200.8" stroke="#777" stroke-width="1.9"/>
<path d="M539.2,195.8H553.6M546.4,188.6V203" stroke="#333" stroke-width="2.2"/>
</g>
</svg>
</body></html>
